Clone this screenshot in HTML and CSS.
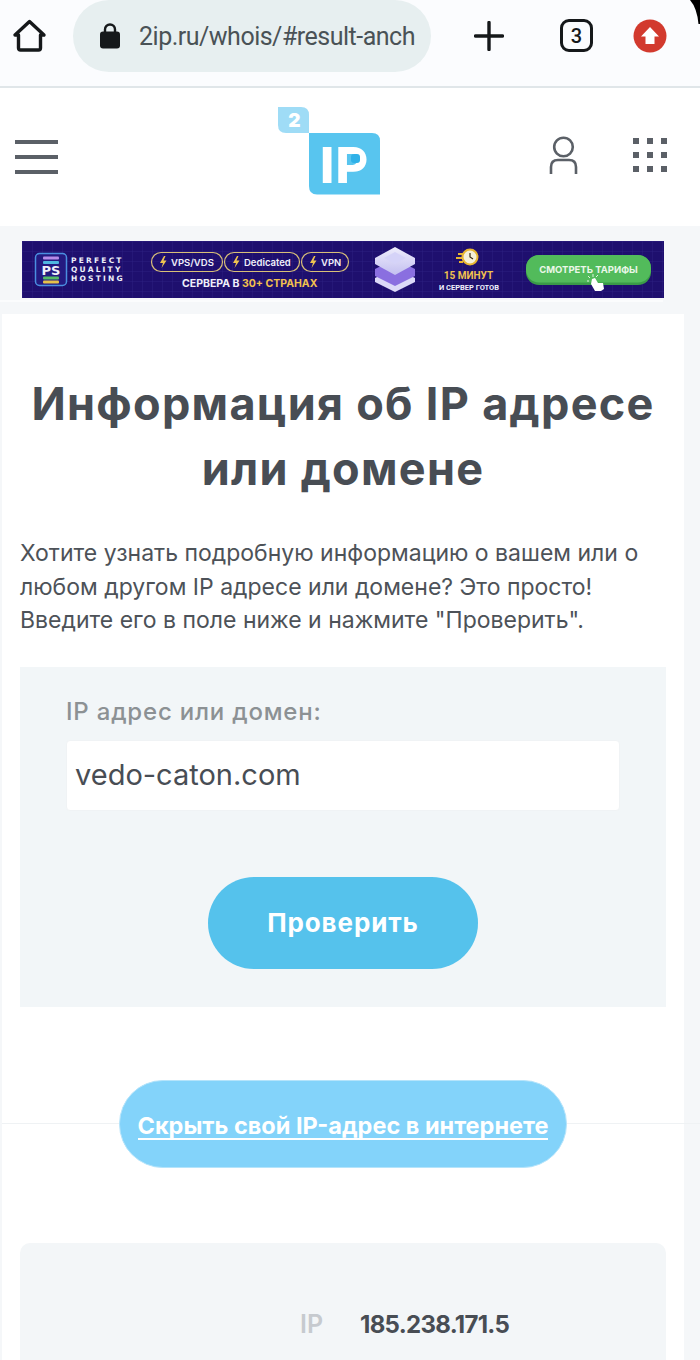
FILE: index.html
```html
<!DOCTYPE html>
<html lang="ru">
<head>
<meta charset="utf-8">
<title>2ip.ru whois</title>
<link rel="stylesheet" href="styles.css">
</head>
<body>
<div class="screen">
  <div class="chrome">
    <svg class="home" width="34" height="34" viewBox="0 0 34 34"><path d="M2 16 L16.5 2.5 L31 16 H27.5 V29 Q27.5 31 25.5 31 H7.5 Q5.5 31 5.5 29 V16 Z" fill="none" stroke="#15181a" stroke-width="3.4" stroke-linejoin="round"/></svg>
    <div class="pill">
      <svg class="lock" width="20" height="26" viewBox="0 0 20 26"><path d="M5 11 V6.5 A5 5 0 0 1 15 6.5 V11" fill="none" stroke="#16191b" stroke-width="2.4"/><rect x="0" y="8.5" width="20" height="17" rx="3" fill="#16191b"/></svg>
      <span class="url">2ip.ru/whois/#result-anch</span>
    </div>
    <svg class="plus" width="30" height="30" viewBox="0 0 30 30"><path d="M1.5 15 H28.5 M15 1.5 V28.5" stroke="#15181a" stroke-width="3.4" stroke-linecap="round"/></svg>
    <span class="tabs">3</span>
    <svg class="update" width="34" height="34" viewBox="0 0 34 34"><circle cx="17" cy="17" r="16.5" fill="#d23a2e"/><path d="M17 8 L26 17.5 H21.5 V25 H12.5 V17.5 H8 Z" fill="#fff"/></svg>
    <svg class="corner" width="10" height="24" viewBox="0 0 10 24"><path d="M0 0 Q7 8 8.5 24 H10 V0 Z" fill="#000"/></svg>
  </div>

  <header class="site-head">
    <div class="burger"><i></i><i></i><i></i></div>
    <svg class="logo" width="102" height="88" viewBox="0 0 102 88">
      <path d="M0 0 H23 Q31 0 31 8 V26 H8 Q0 26 0 18 Z" fill="#9fdcf6"/>
      <text x="16.5" y="20" class="logo-two">2</text>
      <path d="M31 26 H94 Q102 26 102 34 V87.5 H39 Q31 87.5 31 79 Z" fill="#58c5ef"/>
      <text x="42 57.5" y="76" class="logo-ip">IP</text>
      <rect x="73" y="47" width="9" height="9" rx="3" fill="#2fb1e8"/>
    </svg>
    <div class="head-icons">
      <svg width="30" height="40" viewBox="0 0 30 40"><circle cx="14.5" cy="12" r="9.3" fill="none" stroke="#5b6067" stroke-width="2.6"/><path d="M2 39 V32 Q2 25 9 25 H20 Q27 25 27 32 V39" fill="none" stroke="#5b6067" stroke-width="2.6"/></svg>
      <div class="dots"><i></i><i></i><i></i><i></i><i></i><i></i><i></i><i></i><i></i></div>
    </div>
  </header>

  <div class="banner-wrap">
    <svg class="banner" width="642" height="57" viewBox="0 0 642 57">
      <defs>
        <pattern id="grid" width="10" height="10" patternUnits="userSpaceOnUse"><path d="M10 0 H0 V10" fill="none" stroke="#2c2080" stroke-width="1"/></pattern>
        <linearGradient id="stackA" x1="0" x2="0" y1="0" y2="1"><stop offset="0" stop-color="#eeedfc"/><stop offset="1" stop-color="#c3bff0"/></linearGradient>
      </defs>
      <rect width="642" height="57" fill="#1e0f6e"/>
      <rect width="642" height="57" fill="url(#grid)"/>
      <rect x="13.5" y="12.5" width="31" height="32" rx="4" fill="#241a80" stroke="#4a8fe0" stroke-width="1.5"/>
      <rect x="21" y="15.5" width="16" height="3" rx="1" fill="#b58ae8"/>
      <rect x="21" y="20" width="16" height="3" rx="1" fill="#4fb8e0"/>
      <text x="29" y="34" class="b-mark">PS</text>
      <rect x="21" y="35.5" width="16" height="3" rx="1" fill="#55bb66"/>
      <rect x="21" y="39.5" width="16" height="3" rx="1" fill="#e6c24a"/>
      <text x="49" y="21.5" class="b-brand">PERFECT</text>
      <text x="49" y="30.5" class="b-brand">QUALITY</text>
      <text x="49" y="39.5" class="b-brand">HOSTING</text>
      <rect x="129.5" y="11.5" width="71" height="19" rx="9.5" class="b-pill"/>
      <rect x="202.5" y="11.5" width="75" height="19" rx="9.5" class="b-pill"/>
      <rect x="279.5" y="11.5" width="47" height="19" rx="9.5" class="b-pill"/>
      <path d="M142 15 L138 22 H141 L139.5 27 L144.5 19.5 H141.5 L143.5 15 Z" class="b-bolt"/>
      <path d="M215 15 L211 22 H214 L212.5 27 L217.5 19.5 H214.5 L216.5 15 Z" class="b-bolt"/>
      <path d="M292 15 L288 22 H291 L289.5 27 L294.5 19.5 H291.5 L293.5 15 Z" class="b-bolt"/>
      <text x="149" y="25" class="b-pilltext">VPS/VDS</text>
      <text x="222" y="25" class="b-pilltext">Dedicated</text>
      <text x="299" y="25" class="b-pilltext">VPN</text>
      <text x="160" y="46" class="b-where">СЕРВЕРА В <tspan class="b-gold">30+ СТРАНАХ</tspan></text>
      <path d="M353 37 L373 27 L393 37 V41 L373 51 L353 41 Z" fill="#dcdaf8"/>
      <path d="M353 28 L373 18 L393 28 V35 L373 45 L353 35 Z" fill="#8a6fe0"/>
      <path d="M353 17 L373 6 L393 17 V23 L373 34 L353 23 Z" fill="url(#stackA)"/>
      <path d="M362 17 L373 11 L384 17 L373 23 Z" fill="#d5d3f8"/>
      <circle cx="448" cy="16" r="7.5" fill="#f5f0d8" stroke="#e7b531" stroke-width="2"/>
      <path d="M448 12 V16 L451 18" fill="none" stroke="#3a2a10" stroke-width="1.2"/>
      <path d="M436 13 H441 M434 17 H440 M437 21 H441" stroke="#e7b531" stroke-width="1.8"/>
      <text x="446.5" y="38" class="b-mins">15 МИНУТ</text>
      <text x="447" y="49" class="b-ready">И СЕРВЕР ГОТОВ</text>
      <rect x="504" y="14" width="125" height="30" rx="13" fill="#3a9a48"/>
      <rect x="504" y="14" width="125" height="27.5" rx="13" fill="#52bb5b"/>
      <text x="566.5" y="31.5" class="b-cta">СМОТРЕТЬ ТАРИФЫ</text>
      <path d="M570 38 L573 37 L576 42 L581 42 L582 48 L579 50 L573 50 L569 43 Z" fill="#fff"/>
      <path d="M566 35 L568 37 M571 33 V36 M576 34 L574 36 M565 40 H567" stroke="#dff5e0" stroke-width="1"/>
    </svg>
    <div class="banner-strip"></div>
  </div>

  <main class="card">
    <h1 class="title">Информация об IP адресе<br>или домене</h1>
    <p class="lead">Хотите узнать подробную информацию о вашем или о<br>любом другом IP адресе или домене? Это просто!<br>Введите его в поле ниже и нажмите "Проверить".</p>
    <form class="check-form">
      <label class="field-label" for="host">IP адрес или домен:</label>
      <div class="field" id="host">vedo-caton.com</div>
      <div class="submit-row"><span class="submit">Проверить</span></div>
    </form>
    <div class="hide-row">
      <span class="hide-btn"><a class="hide-link">Скрыть свой IP-адрес в интернете</a></span>
    </div>
    <section class="result">
      <div class="result-row">
        <span class="result-key">IP</span>
        <span class="result-value">185.238.171.5</span>
      </div>
    </section>
  </main>
</div>
</body>
</html>
```
FILE: styles.css
```css
* { box-sizing: border-box; }
html, body { margin: 0; padding: 0; }
body { background: #f5f7f9; font-family: Inter, "Noto Sans", sans-serif; color: #484d54; }
.screen { width: 700px; height: 1360px; overflow: hidden; position: relative; background: #f5f7f9; }

.chrome { position: relative; height: 88px; background: #fbfcfe; border-bottom: 2px solid #e0e6e9; display: flex; align-items: flex-start; padding: 19px 0 0 13px; }
.home { flex: none; }
.pill { flex: none; width: 358px; height: 72px; margin: -19px 0 0 26px; background: #e7eff0; border-radius: 36px; display: flex; align-items: center; padding-left: 27px; }
.lock { flex: none; }
.url { margin-left: 19px; font-family: Roboto, sans-serif; font-size: 25px; letter-spacing: -0.5px; color: #4a5256; white-space: nowrap; }
.plus { flex: none; margin: 2px 0 0 43px; }
.tabs { flex: none; width: 33px; height: 33px; margin-left: 56px; border: 3.4px solid #15181a; border-radius: 9px; display: flex; align-items: center; justify-content: center; font-family: Roboto, sans-serif; font-weight: 500; font-size: 20px; color: #15181a; }
.update { flex: none; margin-left: 40px; }
.corner { position: absolute; top: 0; right: 0; }

.site-head { height: 138px; background: #fff; display: flex; align-items: flex-start; padding-left: 15px; position: relative; }
.burger { width: 43px; margin-top: 52px; display: flex; flex-direction: column; gap: 11px; }
.burger i { display: block; height: 4px; background: #5b6067; }
.logo { flex: none; margin: 19px 0 0 220px; overflow: visible; }
.logo-two { font-family: Inter, sans-serif; font-weight: 900; font-size: 19px; fill: #fff; text-anchor: middle; }
.logo-ip { font-family: Inter, sans-serif; font-weight: 800; font-size: 50px; fill: #fff; }
.head-icons { margin: 47px 0 0 169px; display: flex; gap: 54px; align-items: flex-start; }
.dots { width: 34px; margin-top: 3px; display: grid; grid-template-columns: repeat(3, 6px); grid-auto-rows: 6px; gap: 8px; }
.dots i { background: #5b6067; }

.banner-wrap { padding: 15px 0 0 22px; }
.banner { display: block; }
.banner-strip { width: 663px; height: 2px; margin: 2px 0 12px -22px; background: #fbfcfd; }
.b-mark { font-family: "DejaVu Sans", sans-serif; font-weight: 700; font-size: 13px; fill: #eef0fa; text-anchor: middle; }
.b-brand { font-family: "DejaVu Sans", sans-serif; font-weight: 700; font-size: 7.5px; letter-spacing: 2.2px; fill: #eef0fa; }
.b-pill { fill: none; stroke: #d8bf78; stroke-width: 1.2; }
.b-bolt { fill: #f0c550; }
.b-pilltext { font-family: Inter, sans-serif; font-weight: 600; font-size: 9.5px; fill: #f0f0fa; }
.b-where { font-family: Inter, sans-serif; font-weight: 700; font-size: 10.5px; fill: #f0f0fa; }
.b-gold { fill: #f2c14e; }
.b-mins { font-family: Roboto, sans-serif; font-weight: 700; font-size: 10px; fill: #f2c14e; text-anchor: middle; }
.b-ready { font-family: Roboto, sans-serif; font-weight: 700; font-size: 7.5px; fill: #f0f0fa; text-anchor: middle; }
.b-cta { font-family: Inter, sans-serif; font-weight: 700; font-size: 9.5px; fill: #eaf7e8; text-anchor: middle; }

.card { width: 682px; margin-left: 2px; height: 1100px; background: #fff; padding: 57px 18px 0; }
.title { margin: 0; text-align: center; font-size: 45px; line-height: 65px; font-weight: 700; letter-spacing: 1.3px; color: #484d54; white-space: nowrap; }
.lead { margin: 36px 0 0; font-size: 23px; line-height: 33.5px; color: #4d5258; white-space: nowrap; }
.check-form { margin-top: 29px; height: 340px; background: #f2f6f8; padding: 30px 46px 0; }
.field-label { display: block; font-size: 24px; line-height: 30px; font-weight: 500; letter-spacing: 0.8px; color: #8c9194; }
.field { margin-top: 13px; height: 71px; background: #fff; border: 1px solid #f0f3f5; border-radius: 4px; padding-left: 8px; font-size: 29px; line-height: 68px; color: #484d54; }
.submit-row { margin-top: 66px; display: flex; justify-content: center; }
.submit { width: 270px; height: 92px; border-radius: 46px; background: #55c2ec; color: #fff; font-size: 26px; font-weight: 700; letter-spacing: 0.9px; display: flex; align-items: center; justify-content: center; }
.hide-row { position: relative; margin: 73px -34px 0 -18px; display: flex; justify-content: center; padding-right: 16px; }
.hide-row::before { content: ""; position: absolute; left: 0; right: 0; top: 43px; height: 1px; background: #eff2f4; }
.hide-btn { position: relative; width: 448px; height: 88px; border-radius: 44px; background: #83d3fa; border: 1px solid #b5e4fb; display: flex; align-items: flex-end; justify-content: center; padding-bottom: 27px; }
.hide-link { color: #fff; font-size: 23.5px; font-weight: 700; line-height: 25px; border-bottom: 2px solid #fff; white-space: nowrap; }
.result { margin-top: 75px; height: 160px; background: #f3f6f8; border-radius: 10px; padding: 66px 0 0 280px; }
.result-row { display: flex; align-items: baseline; gap: 37px; }
.result-key { font-size: 25px; font-weight: 600; color: #c6cacf; }
.result-value { font-size: 24px; font-weight: 700; letter-spacing: -0.7px; color: #484d54; }
```
